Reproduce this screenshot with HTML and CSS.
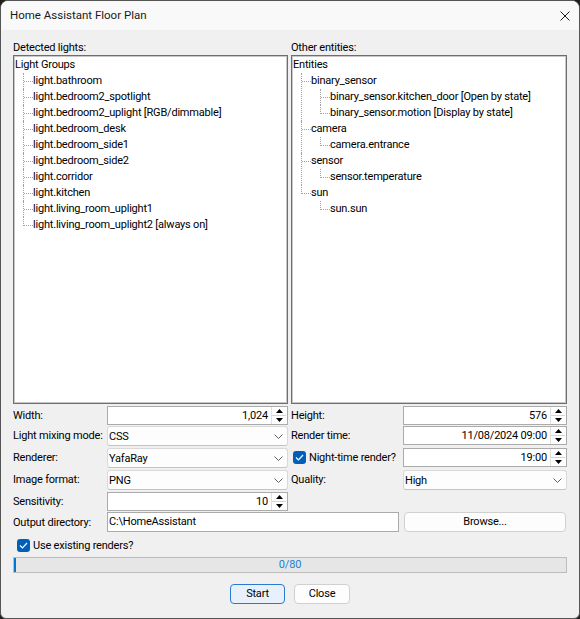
FILE: index.html
```html
<!DOCTYPE html>
<html>
<head>
<meta charset="utf-8">
<link rel="stylesheet" href="styles.css">
</head>
<body>
<div class="window">
  <div class="titlebar">
    <span class="title">Home Assistant Floor Plan</span>
    <svg class="close" width="10" height="10" viewBox="0 0 10 10"><path d="M0.5 0.5 L9.5 9.5 M9.5 0.5 L0.5 9.5" stroke="#1a1a1a" stroke-width="1" fill="none"/></svg>
  </div>
  <div class="content">
    <div class="lists">
      <div class="col">
        <div class="caption">Detected lights:</div>
        <div class="tree">
          <div class="row root">Light Groups</div>
          <ul>
            <li><div class="row"><span class="h"></span>light.bathroom</div></li>
            <li><div class="row"><span class="h"></span>light.bedroom2_spotlight</div></li>
            <li><div class="row"><span class="h"></span>light.bedroom2_uplight [RGB/dimmable]</div></li>
            <li><div class="row"><span class="h"></span>light.bedroom_desk</div></li>
            <li><div class="row"><span class="h"></span>light.bedroom_side1</div></li>
            <li><div class="row"><span class="h"></span>light.bedroom_side2</div></li>
            <li><div class="row"><span class="h"></span>light.corridor</div></li>
            <li><div class="row"><span class="h"></span>light.kitchen</div></li>
            <li><div class="row"><span class="h"></span>light.living_room_uplight1</div></li>
            <li><div class="row"><span class="h"></span>light.living_room_uplight2 [always on]</div></li>
          </ul>
        </div>
      </div>
      <div class="col">
        <div class="caption">Other entities:</div>
        <div class="tree">
          <div class="row root">Entities</div>
          <ul>
            <li><div class="row"><span class="h"></span>binary_sensor</div>
              <ul>
                <li><div class="row"><span class="h"></span>binary_sensor.kitchen_door [Open by state]</div></li>
                <li><div class="row"><span class="h"></span>binary_sensor.motion [Display by state]</div></li>
              </ul>
            </li>
            <li><div class="row"><span class="h"></span>camera</div>
              <ul>
                <li><div class="row"><span class="h"></span>camera.entrance</div></li>
              </ul>
            </li>
            <li><div class="row"><span class="h"></span>sensor</div>
              <ul>
                <li><div class="row"><span class="h"></span>sensor.temperature</div></li>
              </ul>
            </li>
            <li><div class="row"><span class="h"></span>sun</div>
              <ul>
                <li><div class="row"><span class="h"></span>sun.sun</div></li>
              </ul>
            </li>
          </ul>
        </div>
      </div>
    </div>

    <div class="form">
      <div class="lbl">Width:</div>
      <div class="spin"><span class="val">1,024</span><span class="arrows"><span class="ab"><svg width="7" height="4" viewBox="0 0 7 4"><path d="M3.5 0 L7 4 L0 4 Z" fill="#000"/></svg></span><span class="ab"><svg width="7" height="4" viewBox="0 0 7 4"><path d="M0 0 L7 0 L3.5 4 Z" fill="#000"/></svg></span></span></div>
      <div class="lbl r">Height:</div>
      <div class="spin"><span class="val">576</span><span class="arrows"><span class="ab"><svg width="7" height="4" viewBox="0 0 7 4"><path d="M3.5 0 L7 4 L0 4 Z" fill="#000"/></svg></span><span class="ab"><svg width="7" height="4" viewBox="0 0 7 4"><path d="M0 0 L7 0 L3.5 4 Z" fill="#000"/></svg></span></span></div>

      <div class="lbl">Light mixing mode:</div>
      <div class="combo"><span>CSS</span><svg width="9" height="5" viewBox="0 0 9 5"><path d="M0.5 0.5 L4.5 4.5 L8.5 0.5" stroke="#606060" fill="none"/></svg></div>
      <div class="lbl r">Render time:</div>
      <div class="spin"><span class="val">11/08/2024 09:00</span><span class="arrows"><span class="ab"><svg width="7" height="4" viewBox="0 0 7 4"><path d="M3.5 0 L7 4 L0 4 Z" fill="#000"/></svg></span><span class="ab"><svg width="7" height="4" viewBox="0 0 7 4"><path d="M0 0 L7 0 L3.5 4 Z" fill="#000"/></svg></span></span></div>

      <div class="lbl">Renderer:</div>
      <div class="combo"><span>YafaRay</span><svg width="9" height="5" viewBox="0 0 9 5"><path d="M0.5 0.5 L4.5 4.5 L8.5 0.5" stroke="#606060" fill="none"/></svg></div>
      <div class="lbl r chk"><span class="box"><svg width="9" height="7" viewBox="0 0 9 7"><path d="M1 3.5 L3.5 6 L8 1" stroke="#fff" stroke-width="1.2" fill="none"/></svg></span>Night-time render?</div>
      <div class="spin"><span class="val">19:00</span><span class="arrows"><span class="ab"><svg width="7" height="4" viewBox="0 0 7 4"><path d="M3.5 0 L7 4 L0 4 Z" fill="#000"/></svg></span><span class="ab"><svg width="7" height="4" viewBox="0 0 7 4"><path d="M0 0 L7 0 L3.5 4 Z" fill="#000"/></svg></span></span></div>

      <div class="lbl">Image format:</div>
      <div class="combo"><span>PNG</span><svg width="9" height="5" viewBox="0 0 9 5"><path d="M0.5 0.5 L4.5 4.5 L8.5 0.5" stroke="#606060" fill="none"/></svg></div>
      <div class="lbl r">Quality:</div>
      <div class="combo"><span>High</span><svg width="9" height="5" viewBox="0 0 9 5"><path d="M0.5 0.5 L4.5 4.5 L8.5 0.5" stroke="#606060" fill="none"/></svg></div>

      <div class="lbl">Sensitivity:</div>
      <div class="spin"><span class="val">10</span><span class="arrows"><span class="ab"><svg width="7" height="4" viewBox="0 0 7 4"><path d="M3.5 0 L7 4 L0 4 Z" fill="#000"/></svg></span><span class="ab"><svg width="7" height="4" viewBox="0 0 7 4"><path d="M0 0 L7 0 L3.5 4 Z" fill="#000"/></svg></span></span></div>
    </div>

    <div class="outrow">
      <div class="lbl">Output directory:</div>
      <div class="edit">C:\HomeAssistant</div>
      <div class="btn browse">Browse...</div>
    </div>

    <div class="checkrow">
      <span class="box"><svg width="9" height="7" viewBox="0 0 9 7"><path d="M1 3.5 L3.5 6 L8 1" stroke="#fff" stroke-width="1.2" fill="none"/></svg></span>Use existing renders?
    </div>

    <div class="progress"><span class="chunk"></span><span class="ptext">0/80</span></div>

    <div class="buttons">
      <div class="btn primary">Start</div>
      <div class="btn secondary">Close</div>
    </div>
  </div>
</div>
</body>
</html>
```

FILE: styles.css
```css
html, body {
  margin: 0;
  padding: 0;
  background: #1e1e1e;
}
body {
  font-family: Roboto, "Liberation Sans", sans-serif;
  font-size: 11px;
  letter-spacing: -0.2px;
  color: #000;
}
.window {
  width: 580px;
  height: 619px;
  box-sizing: border-box;
  border: 1px solid #555;
  border-radius: 8px 8px 6px 6px;
  background: #f0f0f0;
  overflow: hidden;
  display: flex;
  flex-direction: column;
}
.titlebar {
  height: 29px;
  flex: none;
  background: #f9f9f9;
  display: flex;
  align-items: center;
  justify-content: space-between;
  padding: 0 9px 0 9px;
}
.title {
  color: #1a1a1a;
  font-size: 11.5px;
  letter-spacing: 0;
  line-height: 29px;
}
.content {
  padding: 10px 12px 0 12px;
  display: flex;
  flex-direction: column;
}
.lists {
  display: grid;
  grid-template-columns: 275px 276px;
  column-gap: 3px;
}
.caption {
  height: 15px;
  line-height: 15px;
}
.tree {
  height: 349px;
  box-sizing: border-box;
  border: 1px solid #6e6e6e;
  box-shadow: inset 0 0 0 1px #c8c8c8;
  background: #fff;
  overflow: hidden;
  padding-top: 1px;
}
.tree ul {
  list-style: none;
  margin: 0 0 0 9px;
  padding: 0;
}
.tree ul ul {
  margin-left: 18px;
}
.tree li {
  border-left: 1px dotted #a0a0a0;
}
.tree li:last-child {
  border-left-color: transparent;
}
.row {
  display: flex;
  align-items: flex-start;
  height: 16px;
  line-height: 16px;
  white-space: nowrap;
}
.row.root {
  padding-left: 1px;
}
.h {
  flex: none;
  width: 9px;
  height: 8px;
  border-bottom: 1px dotted #a0a0a0;
}
.tree li:last-child > .row > .h {
  margin-left: -1px;
  border-left: 1px dotted #a0a0a0;
}

.form {
  margin-top: 2px;
  display: grid;
  grid-template-columns: 94px 181px 115px 164px;
  grid-template-rows: 20px 22px 22px 22px 20px;
  align-items: start;
}
.lbl {
  height: 19px;
  line-height: 19px;
  white-space: nowrap;
}
.lbl.r {
  padding-left: 3px;
}
.lbl.chk {
  display: flex;
  align-items: center;
  padding-left: 5px;
}
.box {
  width: 13px;
  height: 13px;
  border-radius: 3px;
  background: #005fb8;
  display: inline-flex;
  align-items: center;
  justify-content: center;
  margin-right: 3px;
  flex: none;
}
.spin {
  height: 19px;
  box-sizing: border-box;
  border: 1px solid #ababab;
  background: #fff;
  display: flex;
}
.val {
  flex: 1;
  text-align: right;
  line-height: 17px;
  padding-right: 3px;
}
.arrows {
  width: 14px;
  display: flex;
  flex-direction: column;
  margin: 0 1px 0 0;
  border-left: 1px solid #e0e0e0;
}
.ab {
  flex: 1;
  display: flex;
  align-items: center;
  justify-content: center;
}
.ab + .ab {
  border-top: 1px solid #d6d6d6;
}
.combo {
  height: 20px;
  box-sizing: border-box;
  border: 1px solid #d9d9d9;
  border-bottom-color: #c4c4c4;
  border-radius: 3px;
  background: #fdfdfd;
  display: flex;
  align-items: center;
  justify-content: space-between;
  padding: 0 4px 0 1px;
}
.outrow {
  display: flex;
  align-items: center;
  height: 20px;
}
.outrow .lbl {
  width: 94px;
  flex: none;
}
.edit {
  width: 292px;
  height: 20px;
  box-sizing: border-box;
  border: 1px solid #ababab;
  background: #fff;
  line-height: 18px;
  padding-left: 1px;
  flex: none;
}
.btn {
  height: 20px;
  box-sizing: border-box;
  border: 1px solid #d0d0d0;
  border-radius: 4px;
  background: #fdfdfd;
  text-align: center;
  line-height: 18px;
}
.browse {
  width: 162px;
  margin-left: 5px;
}
.checkrow {
  margin-top: 3px;
  height: 20px;
  display: flex;
  align-items: center;
  padding-left: 4px;
}
.progress {
  margin-top: 2px;
  height: 16px;
  box-sizing: border-box;
  border: 1px solid #bcbcbc;
  background: #e6e6e6;
  display: flex;
  align-items: center;
}
.chunk {
  width: 2px;
  height: 14px;
  background: #0078d4;
  flex: none;
}
.ptext {
  flex: 1;
  text-align: center;
  color: #1a7fd4;
  line-height: 14px;
  margin-right: 2px;
}
.buttons {
  margin-top: 11px;
  display: flex;
  justify-content: center;
  gap: 9px;
}
.btn.primary {
  width: 55px;
  border-color: #2a7ad0;
  background: #e8f1fb;
}
.btn.secondary {
  width: 56px;
}
```
